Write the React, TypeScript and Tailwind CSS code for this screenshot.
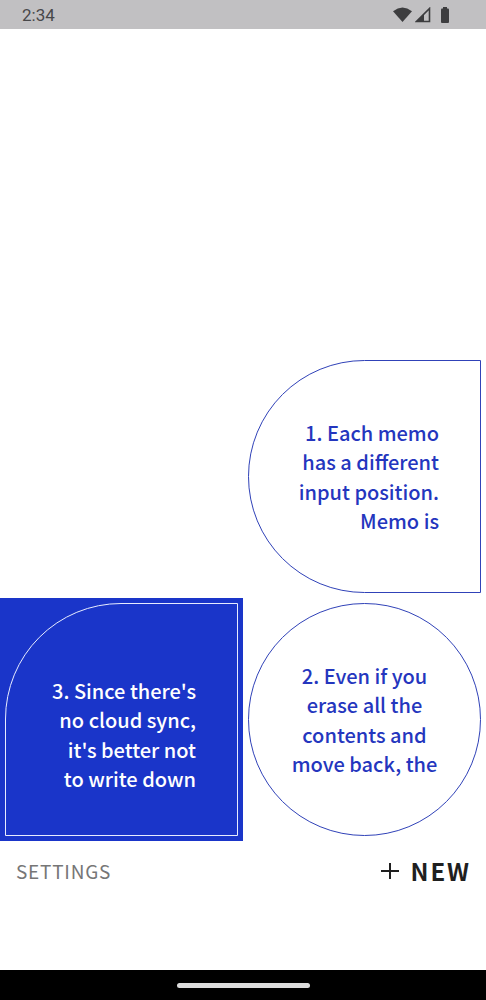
import React from "react";

const font = { fontFamily: '"Noto Sans CJK KR", "Noto Sans", sans-serif' };

function StatusBar() {
  return (
    <div className="h-[29px] bg-[#c1c0c2] flex items-center justify-between pl-[22px] pr-[36px]">
      <span className="text-[17px] text-[#48484a] leading-none pt-[2px]" style={{ fontFamily: "Roboto, sans-serif" }}>
        2:34
      </span>
      <div className="flex items-center gap-[2px] pt-[1px]">
        <svg width="21" height="16" viewBox="0 0 20 16">
          <path d="M10 15 L0.5 4.2 Q10 -3 19.5 4.2 Z" fill="#3d3d3f" />
        </svg>
        <svg width="16" height="16" viewBox="0 0 16 16">
          <path d="M14.5 1.5 L14.5 14.5 L1.5 14.5 Z" fill="none" stroke="#3d3d3f" strokeWidth="1.6" strokeLinejoin="miter" />
          <path d="M9 7 L9 14.5 L1.5 14.5 Z" fill="#3d3d3f" />
        </svg>
        <svg width="10" height="16" viewBox="0 0 10 16" className="ml-[7px]">
          <rect x="3" y="0" width="4" height="2" fill="#3d3d3f" />
          <rect x="1" y="1.5" width="8" height="14.5" rx="1" fill="#3d3d3f" />
        </svg>
      </div>
    </div>
  );
}

function Memo1() {
  return (
    <div className="w-[243px] h-[243px] p-[5px]">
      <div className="w-full h-full border border-[#3042b8] rounded-l-[117px] flex items-center justify-end pr-[41px]">
        <p className="text-right text-[20px] font-medium leading-[29.5px] text-[#2436be]" style={font}>
          1. Each memo
          <br />
          has a different
          <br />
          input position.
          <br />
          Memo is
        </p>
      </div>
    </div>
  );
}

function Memo2() {
  return (
    <div className="w-[243px] h-[243px] p-[5px]">
      <div className="w-full h-full border border-[#3042b8] rounded-full flex items-center justify-center">
        <p className="text-center text-[20px] font-medium leading-[29.5px] text-[#2436be]" style={font}>
          2. Even if you
          <br />
          erase all the
          <br />
          contents and
          <br />
          move back, the
        </p>
      </div>
    </div>
  );
}

function Memo3() {
  return (
    <div className="w-[243px] h-[243px] p-[5px] bg-[#1a35c9]">
      <div className="w-full h-full border border-[#e8ecff] rounded-tl-[116px] flex items-center justify-end pr-[41px] pt-[30px]">
        <p className="text-right text-[20px] font-medium leading-[29.5px] text-white" style={font}>
          3. Since there's
          <br />
          no cloud sync,
          <br />
          it's better not
          <br />
          to write down
        </p>
      </div>
    </div>
  );
}

export default function App() {
  return (
    <div className="w-[486px] h-[1000px] bg-white flex flex-col overflow-hidden">
      <StatusBar />
      <div className="flex-1" />
      <div className="grid grid-cols-[243px_243px]">
        <div />
        <Memo1 />
        <Memo3 />
        <Memo2 />
      </div>
      <div className="h-[129px]">
        <div className="h-[60px] flex items-center justify-between pl-[16px] pr-[15px]">
          <span className="text-[19px] tracking-[0.04em] text-[#767676]" style={font}>
            SETTINGS
          </span>
          <div className="flex items-center gap-[12px]">
            <svg width="18" height="16" viewBox="0 0 18 16">
              <path d="M0 8 H18 M9 0 V16" stroke="#1f1f1f" strokeWidth="2" />
            </svg>
            <span className="text-[24px] font-bold tracking-[0.08em] text-[#1f1f1f] leading-none" style={font}>
              NEW
            </span>
          </div>
        </div>
      </div>
      <div className="h-[30px] bg-black flex items-center justify-center">
        <div className="w-[133px] h-[5px] rounded-full bg-[#dcdcdc]" />
      </div>
    </div>
  );
}
